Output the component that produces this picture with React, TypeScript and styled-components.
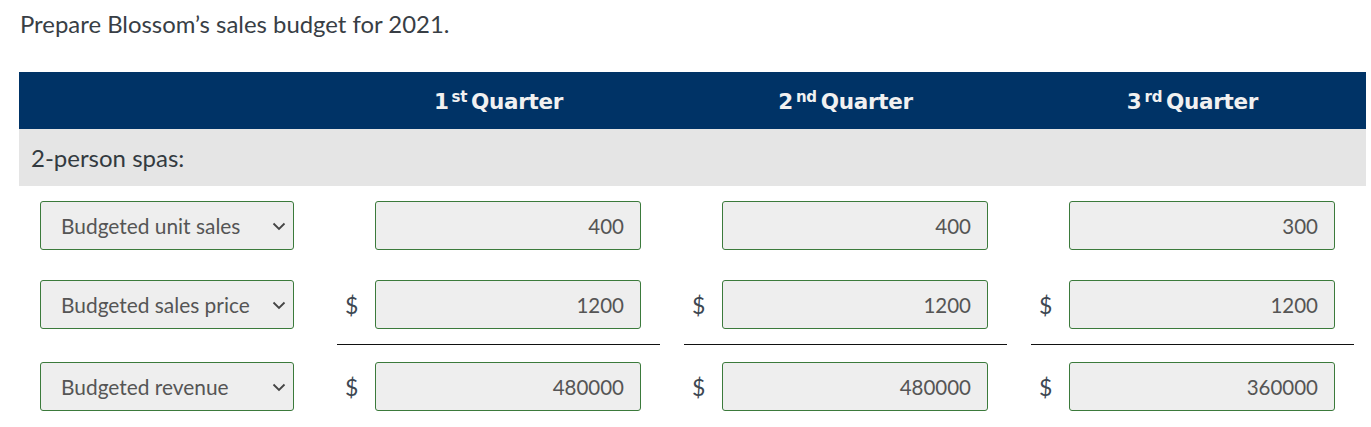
import React from 'react';
import styled, { createGlobalStyle } from 'styled-components';

const GlobalStyle = createGlobalStyle`
  body {
    margin: 0;
    background: #ffffff;
    font-family: Lato, 'Liberation Sans', sans-serif;
  }
`;

const Page = styled.div`
  padding: 9px 0 0 19px;
  width: 1347px;
`;

const Title = styled.p`
  margin: 0 0 34px 1px;
  font-size: 23.9px;
  line-height: 29px;
  color: #383e45;
`;

const Grid = styled.div`
  display: grid;
  grid-template-columns: 306px repeat(3, 1fr);
`;

const HeadCell = styled.div`
  background: #003366;
  height: 57px;
  display: flex;
  align-items: center;
  justify-content: center;
  padding-top: 1px;
  box-sizing: border-box;
  color: #f1f1f1;
  font-family: 'DejaVu Sans', Verdana, sans-serif;
  font-weight: 700;
  font-size: 21.5px;
  letter-spacing: -0.3px;

  sup {
    font-size: 15px;
    line-height: 0;
    position: relative;
    top: -4px;
    margin: 0 4px 0 3px;
  }
`;

const SectionRow = styled.div`
  grid-column: 1 / -1;
  background: #e5e5e5;
  height: 57px;
  display: flex;
  align-items: center;
  padding-left: 12px;
  font-size: 24px;
  color: #333a40;
`;

const LabelCell = styled.div<{ $top: number }>`
  padding: ${(p) => p.$top}px 0 15px 21px;
`;

const ValueCell = styled.div<{ $top: number; $rule?: boolean }>`
  padding: ${(p) => p.$top}px 0 15px;
  margin: 0 12px;
  border-bottom: 1px solid ${(p) => (p.$rule ? '#111' : 'transparent')};
  display: flex;
  align-items: center;
`;

const Dollar = styled.span`
  width: 38px;
  padding-left: 8px;
  box-sizing: border-box;
  font-size: 23px;
  color: #3d4752;
`;

const fieldBox = `
  box-sizing: border-box;
  height: 49px;
  border: 1px solid #3b7a3b;
  border-radius: 3px;
  background: #eeeeee;
  color: #555555;
  font-family: Lato, 'Liberation Sans', sans-serif;
`;

const Select = styled.div`
  ${fieldBox}
  width: 254px;
  display: flex;
  align-items: center;
  justify-content: space-between;
  padding: 0 6px 0 20px;
  font-size: 20.9px;
`;

const Field = styled.div`
  ${fieldBox}
  width: 266px;
  display: flex;
  align-items: center;
  justify-content: flex-end;
  padding-right: 16px;
  font-size: 20.5px;
`;

const Chevron = () => (
  <svg width="16" height="16" viewBox="0 0 16 16">
    <path d="M2.5 5.5 L8 11 L13.5 5.5" fill="none" stroke="#444" strokeWidth="1.8" />
  </svg>
);

const rows = [
  { label: 'Budgeted unit sales', values: ['400', '400', '300'], dollar: false, top: 15, rule: false },
  { label: 'Budgeted sales price', values: ['1200', '1200', '1200'], dollar: true, top: 14, rule: true },
  { label: 'Budgeted revenue', values: ['480000', '480000', '360000'], dollar: true, top: 17, rule: false },
];

const quarters = [
  ['1', 'st'],
  ['2', 'nd'],
  ['3', 'rd'],
];

export default function App() {
  return (
    <Page>
      <GlobalStyle />
      <Title>Prepare Blossom’s sales budget for 2021.</Title>
      <Grid>
        <HeadCell />
        {quarters.map(([n, s]) => (
          <HeadCell key={n}>
            {n}
            <sup>{s}</sup>Quarter
          </HeadCell>
        ))}
        <SectionRow>2-person spas:</SectionRow>
        {rows.map((r) => (
          <React.Fragment key={r.label}>
            <LabelCell $top={r.top}>
              <Select>
                {r.label}
                <Chevron />
              </Select>
            </LabelCell>
            {r.values.map((v, i) => (
              <ValueCell key={i} $top={r.top} $rule={r.rule}>
                <Dollar>{r.dollar ? '$' : ''}</Dollar>
                <Field>{v}</Field>
              </ValueCell>
            ))}
          </React.Fragment>
        ))}
      </Grid>
    </Page>
  );
}
